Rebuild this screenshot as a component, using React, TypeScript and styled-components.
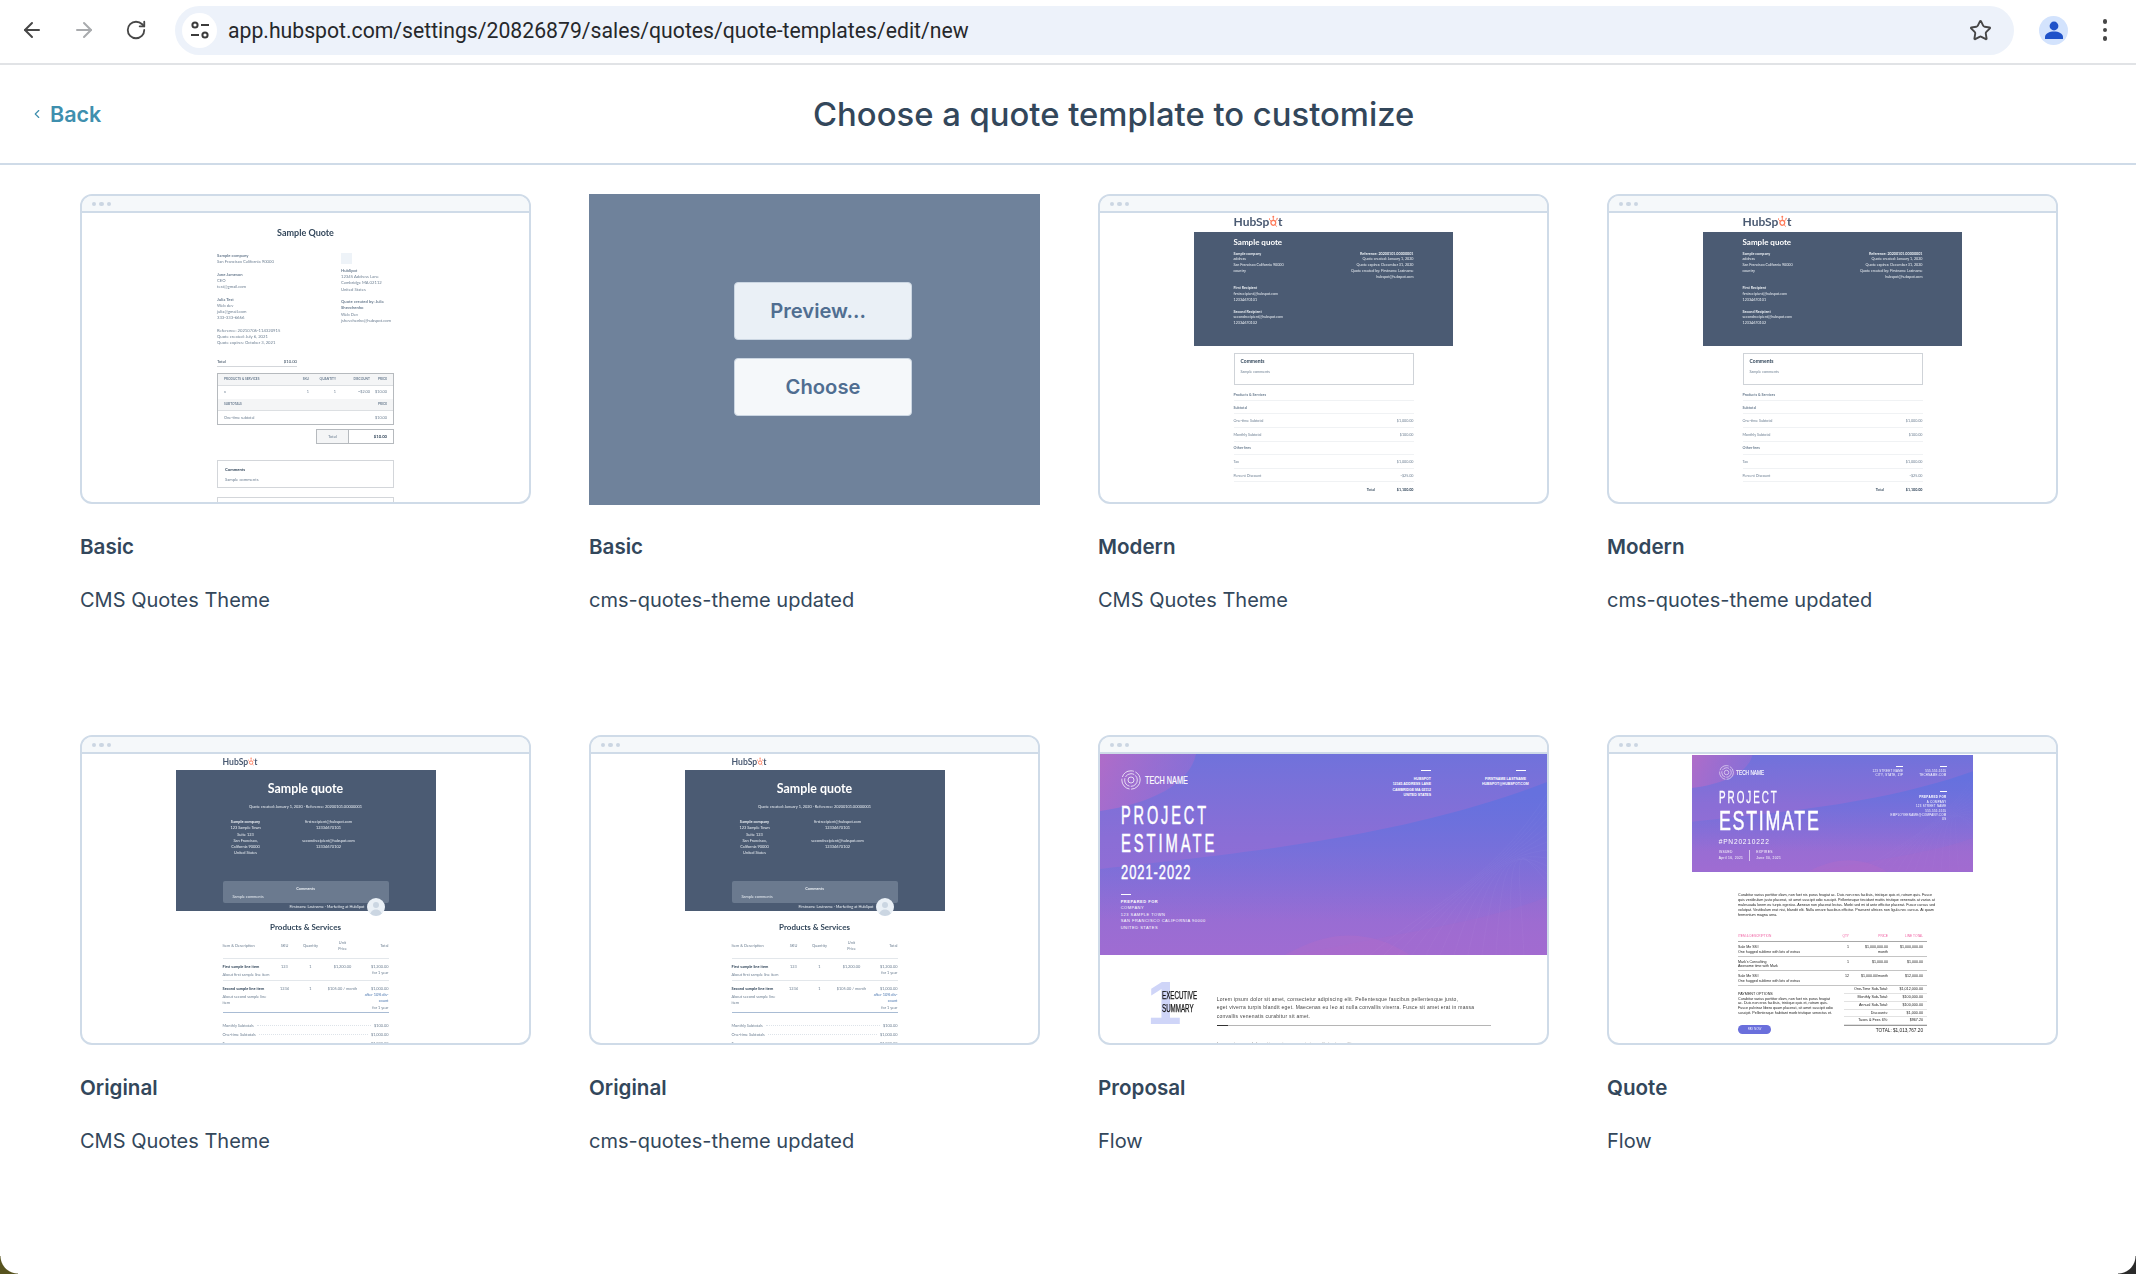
import * as React from 'react';
import styled, { createGlobalStyle } from 'styled-components';
import { ArrowLeft, ArrowRight, ChevronLeft, RotateCw, Star } from 'lucide-react';

const GlobalStyle = createGlobalStyle`
    html, body {
        margin: 0;
        padding: 0;
        background: #ffffff;
    }
    body {
        font-family: Inter, "Noto Sans", sans-serif;
        color: #33475b;
    }
    * {
        box-sizing: border-box;
    }
`;

const Screen = styled.div`
    position: relative;
    width: 2136px;
    height: 1274px;
    overflow: hidden;
    background: #ffffff;

    &::before, &::after {
        content: "";
        position: absolute;
        bottom: 0;
        width: 18px;
        height: 18px;
    }
    &::before {
        left: 0;
        background: radial-gradient(circle at top right, transparent 17px, #57531f 18px);
    }
    &::after {
        right: 0;
        background: radial-gradient(circle at top left, transparent 17px, #2a2a2a 18px);
    }
`;

/* browser toolbar */
const Toolbar = styled.div`
    display: flex;
    align-items: center;
    height: 65px;
    padding: 0 18px 3px 20px;
    border-bottom: 2px solid #e1e3e6;
`;

const NavButton = styled.div<{ $off?: boolean }>`
    display: flex;
    align-items: center;
    justify-content: center;
    width: 24px;
    height: 24px;
    margin-right: 28px;
    color: ${p => (p.$off ? '#a9abae' : '#474747')};
`;

const AddressBar = styled.div`
    display: flex;
    align-items: center;
    width: 1839px;
    height: 49px;
    margin-left: -1px;
    padding: 0 22px 0 7px;
    border-radius: 25px;
    background: #edf2fa;
`;

const TuneChip = styled.div`
    display: flex;
    align-items: center;
    justify-content: center;
    width: 35px;
    height: 35px;
    border-radius: 50%;
    background: #ffffff;
    color: #3b3b3b;
`;

const Url = styled.span`
    flex: 1;
    margin-left: 11px;
    font-family: Roboto, sans-serif;
    font-size: 21.2px;
    color: #26282b;
`;

const Avatar = styled.div`
    display: flex;
    align-items: center;
    justify-content: center;
    width: 29px;
    height: 29px;
    margin-left: 25px;
    border-radius: 50%;
    background: #d3e3fd;
    color: #1f52c9;
`;

const MenuDots = styled.div`
    display: flex;
    flex-direction: column;
    gap: 4px;
    margin-left: 35px;

    & > i {
        display: block;
        width: 4.4px;
        height: 4.4px;
        border-radius: 50%;
        background: #474747;
    }
`;

/* page header */
const Header = styled.header`
    display: flex;
    align-items: center;
    height: 100px;
    padding: 0 10px 0 30px;
    border-bottom: 2px solid #cfdbe8;
`;

const BackLink = styled.a`
    display: flex;
    align-items: center;
    gap: 6px;
    font-size: 21.5px;
    font-weight: 600;
    color: #3f8fae;
`;

const PageTitle = styled.h1`
    flex: 1;
    margin: 0;
    text-align: center;
    font-size: 32.8px;
    font-weight: 520;
    color: #33475b;
`;

/* template grid */
const Grid = styled.main`
    display: grid;
    grid-template-columns: repeat(4, 451px);
    column-gap: 58px;
    row-gap: 119px;
    padding: 29px 0 0 80px;
`;

const Item = styled.section`
    display: flex;
    flex-direction: column;
`;

const Card = styled.div`
    position: relative;
    display: flex;
    flex-direction: column;
    height: 310px;
    border: 2px solid #cfdbe8;
    border-radius: 12px;
    overflow: hidden;
    background: #ffffff;
`;

const CardBar = styled.div`
    display: flex;
    align-items: center;
    flex: none;
    gap: 3px;
    height: 17px;
    padding: 1px 0 0 9.5px;
    background: #f5f8fa;
    border-bottom: 2px solid #cfdbe8;

    & > i {
        display: block;
        width: 4.5px;
        height: 4.5px;
        border-radius: 50%;
        background: #cbd6e2;
    }
`;

const Viewport = styled.div`
    flex: 1;
    min-height: 0;
    overflow: hidden;
    filter: blur(0.3px);
`;

const HoverOverlay = styled.div`
    display: flex;
    flex-direction: column;
    align-items: center;
    justify-content: center;
    gap: 18px;
    height: 311px;
    margin-bottom: -1px;
    padding: 0 0 2px 17px;
    background: #6f829b;
`;

const OverlayButton = styled.div<{ $pale?: boolean; $shift?: boolean }>`
    display: flex;
    align-items: center;
    justify-content: center;
    width: 178px;
    height: 58px;
    padding-right: ${p => (p.$shift ? '10px' : '0')};
    border: 1px solid #cbd6e2;
    border-radius: 4px;
    background: ${p => (p.$pale ? '#f5f8fa' : '#eaf0f6')};
    font-size: 20.2px;
    font-weight: 600;
    color: #506e91;
`;

const ItemTitle = styled.div`
    margin-top: 27px;
    line-height: 32px;
    font-size: 20.6px;
    font-weight: 600;
    color: #33475b;
`;

const ItemSub = styled.div`
    margin-top: 21px;
    line-height: 32px;
    font-size: 20px;
    font-weight: 400;
    color: #33475b;
`;

/* shared thumbnail text */
const Line = styled.div<{ $b?: boolean; $blue?: boolean }>`
    font-weight: ${p => (p.$b ? 700 : 400)};
    color: ${p => (p.$blue ? '#4d78b0' : 'inherit')};
    white-space: nowrap;
`;

const Para = styled.div<{ $gap?: number }>`
    margin-bottom: ${p => p.$gap || 0}px;
`;

const LogoText = styled.div<{ $size: number }>`
    display: inline-flex;
    align-items: center;
    font-family: Lato, sans-serif;
    font-size: ${p => p.$size}px;
    font-weight: 700;
    line-height: 1;
    color: #4a5a72;
`;

const HubLogo = ({ size }: { size: number }) => (
    <LogoText $size={size}>
        HubSp
        <svg width={size * 0.72} height={size * 1.15} viewBox="0 0 18 28">
            <circle cx="9" cy="16" r="5" fill="none" stroke="#ff7a59" strokeWidth="2.6" />
            <path d="M9 11V4M13 13l4-5M5 13L1 9M13 20l3 4" stroke="#ff7a59" strokeWidth="1.8" />
            <circle cx="9" cy="3" r="2" fill="#ff7a59" />
            <circle cx="17" cy="7" r="1.4" fill="#ff7a59" />
            <circle cx="1" cy="8" r="1.4" fill="#ff7a59" />
        </svg>
        t
    </LogoText>
);

/* Basic template thumbnail */
const BasicDoc = styled.div`
    width: 177px;
    margin: 0 auto;
    font-family: Lato, sans-serif;
    font-size: 4.2px;
    line-height: 6.22px;
    color: #6d7f92;
`;

const BasicTitle = styled.div`
    padding-top: 14px;
    margin-bottom: 14px;
    line-height: 12px;
    text-align: center;
    font-size: 9px;
    font-weight: 700;
    color: #33475b;
`;

const BasicColumns = styled.div`
    display: grid;
    grid-template-columns: 124px 1fr;
`;

const LogoStub = styled.div`
    width: 11px;
    height: 11px;
    margin-bottom: 4px;
    background: #eef3f8;
`;

const BasicTotal = styled.div`
    display: flex;
    justify-content: space-between;
    width: 80px;
    margin-top: 12.5px;
    padding-bottom: 1px;
    border-bottom: 1.2px solid #d3d6da;
    color: #33475b;
`;

const BasicTable = styled.div`
    margin-top: 6px;
    border: 1px solid #b6babe;
`;

const BasicRow = styled.div<{ $head?: boolean; $h: number }>`
    display: grid;
    grid-template-columns: 57px 28px 27px 34px 1fr;
    align-items: center;
    height: ${p => p.$h}px;
    padding: 0 6px;
    background: ${p => (p.$head ? '#f4f5f6' : '#ffffff')};
    border-bottom: ${p => (p.$head ? '1.4px solid #dcdfe2' : '0')};
    font-size: ${p => (p.$head ? 3.2 : 3.8)}px;
    font-weight: ${p => (p.$head ? 700 : 400)};

    & > span:not(:first-child) {
        text-align: right;
    }
`;

const BasicSplitRow = styled(BasicRow)`
    grid-template-columns: 1fr auto;
`;

const BasicGrand = styled.div`
    display: grid;
    grid-template-columns: 32px 1fr;
    width: 78px;
    height: 15px;
    margin: 3.7px 0 0 auto;
    border: 1px solid #b6babe;
    line-height: 13px;

    & > span:first-child {
        text-align: center;
        background: #f4f5f6;
        border-right: 1px solid #b6babe;
    }
    & > span:last-child {
        padding-right: 6px;
        text-align: right;
        font-weight: 700;
        color: #33475b;
    }
`;

const BasicBox = styled.div<{ $h: number; $top: number }>`
    height: ${p => p.$h}px;
    margin-top: ${p => p.$top}px;
    padding: 6px 7px 0;
    border: 1px solid #d3d6da;

    & > div:first-child {
        margin-bottom: 4px;
        color: #33475b;
    }
`;

/* Modern template thumbnail */
const ModernDoc = styled.div`
    font-family: Lato, sans-serif;
    font-size: 3.7px;
    line-height: 5.8px;
    color: #6d7f92;
`;

const Column180 = styled.div`
    width: 180px;
    margin: 0 auto;
`;

const ModernLogoRow = styled(Column180)`
    height: 18.7px;
    padding-top: 2px;
`;

const DarkBanner = styled.div<{ $h: number; $w: number }>`
    width: ${p => p.$w}px;
    height: ${p => p.$h}px;
    margin: 0 auto;
    background: #4b5b73;
    color: #e8edf2;
`;

const ModernHeading = styled.div`
    padding-top: 5px;
    margin-bottom: 4px;
    line-height: 10px;
    font-size: 8px;
    font-weight: 700;
    color: #ffffff;
`;

const ModernSplit = styled.div`
    display: flex;
    justify-content: space-between;
`;

const RightText = styled.div`
    text-align: right;
`;

const CommentsBox = styled.div`
    height: 32px;
    margin-top: 7.7px;
    padding: 5px 6px 0;
    border: 1px solid #cfd3d8;

    & > div:first-child {
        margin-bottom: 4px;
        font-size: 5px;
        color: #33475b;
    }
`;

const ModernRow = styled.div<{ $h: number; $ruled?: boolean }>`
    display: flex;
    justify-content: space-between;
    align-items: flex-end;
    height: ${p => p.$h}px;
    padding-bottom: 3px;
    border-bottom: ${p => (p.$ruled ? '1px solid #f0f2f4' : '0')};
`;

const ModernTotal = styled.div`
    display: flex;
    justify-content: flex-end;
    gap: 22px;
    padding-top: 5px;
    font-weight: 700;
    color: #33475b;
`;

/* Original template thumbnail */
const OriginalDoc = styled.div`
    font-family: Lato, sans-serif;
    font-size: 3.9px;
    line-height: 6.25px;
    color: #6d7f92;
`;

const Column166 = styled.div`
    position: relative;
    width: 166px;
    margin: 0 auto;
`;

const OriginalLogoRow = styled(Column166)`
    height: 16.4px;
    padding-top: 3px;
`;

const OriginalHeading = styled.div`
    padding-top: 11px;
    line-height: 16px;
    text-align: center;
    font-size: 12.4px;
    font-weight: 700;
    color: #ffffff;
`;

const OriginalMeta = styled.div`
    margin-top: 7px;
    text-align: center;
`;

const OriginalColumns = styled.div`
    display: grid;
    grid-template-columns: 46px 120px;
    margin-top: 8.4px;
    text-align: center;
`;

const OriginalComments = styled.div`
    height: 22.3px;
    margin-top: 24.2px;
    padding: 4.5px 10px 0;
    border-radius: 2px;
    background: #6b7a8f;
    line-height: 7.6px;

    & > div:first-child {
        text-align: center;
    }
`;

const OriginalSigner = styled.div`
    padding-right: 24px;
    line-height: 8.3px;
    text-align: right;
`;

const SignerAvatar = styled.div`
    position: absolute;
    right: 3.7px;
    bottom: -5px;
    width: 18px;
    height: 18px;
    border-radius: 50%;
    overflow: hidden;
    background: #eaf0f6;
    color: #cbd6e2;
`;

const OriginalSection = styled.div`
    margin-top: 9.6px;
    line-height: 12px;
    text-align: center;
    font-size: 8px;
    font-weight: 700;
    color: #33475b;
`;

const OriginalGrid = styled.div<{ $h: number; $head?: boolean; $blue?: boolean }>`
    display: grid;
    grid-template-columns: 52px 20px 32px 32px 30px;
    align-items: ${p => (p.$head ? 'center' : 'start')};
    height: ${p => p.$h}px;
    padding-top: ${p => (p.$head ? '2px' : '5px')};
    border-bottom: 1px solid ${p => (p.$blue ? '#a9bcd4' : '#e3e7eb')};
    text-align: center;

    & > div:first-child {
        text-align: left;
    }
    & > div:last-child {
        text-align: right;
    }
`;

const ItemName = styled.div`
    margin-bottom: 1.8px;
    font-weight: 700;
    color: #33475b;
    white-space: nowrap;
`;

const WrapLine = styled.div`
    white-space: normal;
`;

const DottedRow = styled.div`
    display: flex;
    align-items: center;
    gap: 3px;
    height: 9px;

    & > i {
        flex: 1;
        border-bottom: 1px dotted #dde3e9;
    }
`;

/* proposal and quote banners */
const WaveBanner = styled.div<{ $h: number; $w?: number }>`
    position: relative;
    width: ${p => (p.$w ? p.$w + 'px' : '100%')};
    height: ${p => p.$h}px;
    margin: 0 auto;
    overflow: hidden;
    background: #8a6ed6;
    color: #ffffff;
    font-family: "Liberation Sans", sans-serif;
`;

const WaveArt = styled.svg`
    position: absolute;
    inset: 0;
    width: 100%;
    height: 100%;
`;

const Narrow = styled.div<{ $size: number; $lh: number; $space?: number; $scale?: number; $right?: boolean; $b?: boolean; $top?: number; $thick?: number }>`
    position: relative;
    margin-top: ${p => p.$top || 0}px;
    font-size: ${p => p.$size}px;
    line-height: ${p => p.$lh}px;
    letter-spacing: ${p => p.$space || 0}px;
    font-weight: ${p => (p.$b ? 700 : 400)};
    -webkit-text-stroke: ${p => p.$thick || 0}px currentColor;
    white-space: nowrap;
    transform: scaleX(${p => p.$scale || 0.62});
    transform-origin: ${p => (p.$right ? 'right' : 'left')} center;
    text-align: ${p => (p.$right ? 'right' : 'left')};
`;

const SmallCaps = styled.div<{ $size: number; $lh: number; $right?: boolean; $b?: boolean; $space?: number; $top?: number }>`
    position: relative;
    margin-top: ${p => p.$top || 0}px;
    font-size: ${p => p.$size}px;
    font-weight: ${p => (p.$b ? 700 : 400)};
    line-height: ${p => p.$lh}px;
    letter-spacing: ${p => (p.$space === undefined ? 0.5 : p.$space)}px;
    text-align: ${p => (p.$right ? 'right' : 'left')};
    white-space: nowrap;
`;

const BrandRow = styled.div<{ $gap: number }>`
    position: relative;
    display: flex;
    align-items: center;
    gap: ${p => p.$gap}px;
`;

const Dash = styled.div<{ $w: number; $right?: boolean; $after: number; $before?: number }>`
    position: relative;
    width: ${p => p.$w}px;
    height: 1px;
    margin: ${p => p.$before || 0}px ${p => (p.$right ? '0' : 'auto')} ${p => p.$after}px ${p => (p.$right ? 'auto' : '0')};
    background: #ffffff;
`;

const TechLogo = ({ size }: { size: number }) => (
    <svg width={size} height={size} viewBox="0 0 24 24" fill="none" stroke="#ffffff" strokeWidth="0.9">
        <circle cx="12" cy="12" r="11" strokeDasharray="17 2" />
        <circle cx="12" cy="12" r="7.6" strokeDasharray="12 1.5" />
        <circle cx="12" cy="12" r="3.6" />
    </svg>
);

const Waves = ({ id }: { id: string }) => (
    <WaveArt viewBox="0 0 447 201" preserveAspectRatio="none">
        <defs>
            <linearGradient id={id + 'base'} x1="0" y1="0" x2="0" y2="1">
                <stop offset="0" stopColor="#7072db" />
                <stop offset="0.42" stopColor="#8a6ed6" />
                <stop offset="1" stopColor="#9f6cd2" />
            </linearGradient>
            <linearGradient id={id + 'band'} gradientUnits="userSpaceOnUse" x1="0" y1="40" x2="0" y2="165">
                <stop offset="0" stopColor="#6671de" />
                <stop offset="1" stopColor="#6671de" stopOpacity="0" />
            </linearGradient>
            <linearGradient id={id + 'pink'} x1="0" y1="0" x2="1" y2="0.3">
                <stop offset="0" stopColor="#b06cc8" />
                <stop offset="1" stopColor="#a56cd0" stopOpacity="0.4" />
            </linearGradient>
        </defs>
        <rect width="447" height="201" fill={`url(#${id}base)`} />
        <path d="M0 115C130 100 300 85 447 28V201H0Z" fill={`url(#${id}band)`} />
        <path d="M0 0H96C90 30 50 50 0 57Z" fill={`url(#${id}pink)`} />
        <path d="M447 143C390 165 340 172 250 190C230 194 210 198 190 201H447Z" fill="#b56cc8" opacity="0.16" />
        <path d="M185 201C225 178 265 172 310 201Z" fill="#bb6dc8" opacity="0.3" />
        {[0, 1, 2, 3, 4, 5, 6, 7, 8, 9, 10, 11].map(i => (
            <path
                key={i}
                d={`M${270 + i * 14} 201C${330 + i * 8} ${150 - i * 5} ${390 + i * 2} ${130 - i * 4} 447 ${40 + i * 8}`}
                fill="none"
                stroke="#ffffff"
                strokeWidth="0.4"
                opacity="0.07"
            />
        ))}
    </WaveArt>
);

/* Proposal template thumbnail */
const ProposalDoc = styled.div`
    font-family: "Liberation Sans", sans-serif;
`;

const ProposalBody = styled.div`
    position: relative;
    height: 201px;
    padding: 16px 21px 0 20.7px;
`;

const ProposalTop = styled.div`
    position: relative;
    display: flex;
    justify-content: space-between;
    align-items: flex-start;
    height: 31px;
`;

const ProposalContacts = styled.div`
    display: flex;
    gap: 40px;
`;

const ContactBlock = styled.div<{ $w: number }>`
    width: ${p => p.$w}px;
`;

const Summary = styled.div`
    position: relative;
    display: flex;
    padding: 34px 0 0 62px;
`;

const BigOne = styled.div`
    position: absolute;
    left: 47px;
    top: 17px;
    font-size: 62px;
    line-height: 62px;
    font-weight: 700;
    color: #cfd5f8;
`;

const SummaryHead = styled.div`
    position: relative;
    width: 54.7px;
    color: #111111;
`;

const SummaryCopy = styled.div`
    width: 274px;
    margin-top: 6px;
    font-size: 5px;
    letter-spacing: 0.27px;
    line-height: 8.3px;
    color: #444444;
    white-space: nowrap;
`;

const SummaryRule = styled.div`
    height: 1px;
    margin-top: 5px;
    background: linear-gradient(to right, #333333 11px, #b5b5b5 11px);
`;

const ClippedLine = styled.div`
    margin-top: 14px;
    color: #888888;
`;

/* Quote template thumbnail */
const QuoteDoc = styled.div`
    padding-top: 1px;
    font-family: "Liberation Sans", sans-serif;
    font-size: 3.7px;
    line-height: 4.9px;
    color: #222222;
`;

const QuoteInner = styled.div`
    position: relative;
    display: flex;
    justify-content: space-between;
    height: 100%;
    padding: 10px 26.7px 0;
`;

const QuoteLeft = styled.div`
    display: flex;
    flex-direction: column;
`;

const QuoteDates = styled.div`
    position: relative;
    display: flex;
    margin-top: 4px;
    font-size: 3.3px;
    line-height: 5.6px;
    letter-spacing: 0.3px;

    & > div:first-child {
        padding-right: 6px;
        margin-right: 6px;
        border-right: 1px solid rgba(255, 255, 255, 0.6);
    }
`;

const QuoteRight = styled.div`
    position: relative;
    display: flex;
    flex-direction: column;
    align-items: flex-end;
    padding-top: 1px;
`;

const QuoteAddress = styled.div`
    display: flex;
    gap: 16px;
    margin-bottom: 14px;
`;

const QuoteBody = styled.div`
    width: 189px;
    margin: 21.5px auto 0;
    white-space: nowrap;
`;

const QuoteCopy = styled.div`
    margin-bottom: 16px;
`;

const QuoteGrid = styled.div<{ $head?: boolean }>`
    display: grid;
    grid-template-columns: 98px 13px 39px 35px;
    height: ${p => (p.$head ? 8 : 14.8)}px;
    padding-top: ${p => (p.$head ? 0 : 3)}px;
    border-bottom: ${p => (p.$head ? '1px solid #a8a8a8' : '1px solid #c4c4c4')};
    color: ${p => (p.$head ? '#ef5da0' : 'inherit')};
    font-size: ${p => (p.$head ? 3.2 : 3.6)}px;

    & > div:not(:first-child) {
        text-align: right;
    }
`;

const QuoteFoot = styled.div`
    display: flex;
`;

const QuotePay = styled.div`
    width: 106px;
    padding-top: 5.5px;
`;

const PayButton = styled.div`
    display: flex;
    align-items: center;
    justify-content: center;
    width: 33px;
    height: 8.7px;
    margin-top: 9px;
    border-radius: 4.4px;
    background: #6a6fdc;
    font-size: 3px;
    color: #e8e8ff;
`;

const QuoteTotals = styled.div`
    flex: 1;
`;

const QuoteSum = styled.div`
    display: grid;
    grid-template-columns: 44px 35px;
    height: 7.8px;
    padding-left: 0;
    border-bottom: 1px solid #e2e2e2;
    line-height: 7px;
    text-align: right;
`;

const QuoteGrand = styled.div`
    padding: 1px 4px 0 0;
    border-top: 1px solid #999999;
    text-align: right;
    line-height: 8px;
    font-size: 4.7px;
`;

const BasicThumb = () => (
    <BasicDoc>
        <BasicTitle>Sample Quote</BasicTitle>
        <BasicColumns>
            <div>
                <Para $gap={6.22}>
                    <Line $b>Sample company</Line>
                    <Line>San Francisco California 90000</Line>
                </Para>
                <Para $gap={6.22}>
                    <Line $b>Jane Jameson</Line>
                    <Line>CEO</Line>
                    <Line>test@gmail.com</Line>
                </Para>
                <Para $gap={6.22}>
                    <Line $b>Julia Test</Line>
                    <Line>Web dev</Line>
                    <Line>julia@gmail.com</Line>
                    <Line>333-333-6666</Line>
                </Para>
                <Line>Reference: 20210706-114320915</Line>
                <Line>Quote created: July 6, 2021</Line>
                <Line>Quote expires: October 3, 2021</Line>
            </div>
            <div>
                <LogoStub />
                <Para $gap={6.22}>
                    <Line $b>HubSpot</Line>
                    <Line>12345 Address Lane</Line>
                    <Line>Cambridge MA 02112</Line>
                    <Line>United States</Line>
                </Para>
                <Line $b>Quote created by: Julia</Line>
                <Line $b>Shevchenko</Line>
                <Line>Web Dev</Line>
                <Line>jshevchenko@hubspot.com</Line>
            </div>
        </BasicColumns>
        <BasicTotal>
            <span>Total</span>
            <span>$10.00</span>
        </BasicTotal>
        <BasicTable>
            <BasicRow $head $h={11.7}>
                <span>PRODUCTS &amp; SERVICES</span>
                <span>SKU</span>
                <span>QUANTITY</span>
                <span>DISCOUNT</span>
                <span>PRICE</span>
            </BasicRow>
            <BasicRow $h={13}>
                <span>x</span>
                <span>1</span>
                <span>1</span>
                <span>−$2.00</span>
                <span>$10.00</span>
            </BasicRow>
            <BasicSplitRow $head $h={12.5}>
                <span>SUBTOTALS</span>
                <span>PRICE</span>
            </BasicSplitRow>
            <BasicSplitRow $h={13}>
                <span>One-time subtotal</span>
                <span>$10.00</span>
            </BasicSplitRow>
        </BasicTable>
        <BasicGrand>
            <span>Total</span>
            <span>$10.00</span>
        </BasicGrand>
        <BasicBox $h={28} $top={15.7}>
            <Line $b>Comments</Line>
            <Line>Sample comments</Line>
        </BasicBox>
        <BasicBox $h={20} $top={9} />
    </BasicDoc>
);

const ModernThumb = () => (
    <ModernDoc>
        <ModernLogoRow>
            <HubLogo size={12} />
        </ModernLogoRow>
        <DarkBanner $w={259} $h={114}>
            <Column180>
                <ModernHeading>Sample quote</ModernHeading>
                <ModernSplit>
                    <div>
                        <Para $gap={11.6}>
                            <Line $b>Sample company</Line>
                            <Line>address</Line>
                            <Line>San Francisco California 90000</Line>
                            <Line>country</Line>
                        </Para>
                        <Para $gap={5.8}>
                            <Line $b>First Recipient</Line>
                            <Line>firstrecipient@hubspot.com</Line>
                            <Line>12334670101</Line>
                        </Para>
                        <Line $b>Second Recipient</Line>
                        <Line>secondrecipient@hubspot.com</Line>
                        <Line>12334670102</Line>
                    </div>
                    <RightText>
                        <Line $b>Reference: 20200101.00000001</Line>
                        <Line>Quote created: January 1, 2020</Line>
                        <Line>Quote expires: December 31, 2020</Line>
                        <Line>Quote created by: Firstname Lastname</Line>
                        <Line>hubspot@hubspot.com</Line>
                    </RightText>
                </ModernSplit>
            </Column180>
        </DarkBanner>
        <Column180>
            <CommentsBox>
                <Line $b>Comments</Line>
                <Line>Sample comments</Line>
            </CommentsBox>
            <ModernRow $h={16} $ruled>
                <Line $b>Products &amp; Services</Line>
            </ModernRow>
            <ModernRow $h={13} $ruled>
                <Line $b>Subtotal</Line>
            </ModernRow>
            <ModernRow $h={13.6} $ruled>
                <Line>One-time Subtotal</Line>
                <Line>$1,000.00</Line>
            </ModernRow>
            <ModernRow $h={13.6} $ruled>
                <Line>Monthly Subtotal</Line>
                <Line>$100.00</Line>
            </ModernRow>
            <ModernRow $h={13.4} $ruled>
                <Line $b>Other fees</Line>
            </ModernRow>
            <ModernRow $h={13.6} $ruled>
                <Line>Tax</Line>
                <Line>$1,000.00</Line>
            </ModernRow>
            <ModernRow $h={13.9} $ruled>
                <Line>Percent Discount</Line>
                <Line>-$25.00</Line>
            </ModernRow>
            <ModernTotal>
                <span>Total</span>
                <span>$1,100.00</span>
            </ModernTotal>
        </Column180>
    </ModernDoc>
);

const OriginalThumb = () => (
    <OriginalDoc>
        <OriginalLogoRow>
            <HubLogo size={8.6} />
        </OriginalLogoRow>
        <DarkBanner $w={260} $h={141}>
            <Column166>
                <OriginalHeading>Sample quote</OriginalHeading>
                <OriginalMeta>Quote created: January 1, 2020 · Reference: 20200101.00000001</OriginalMeta>
                <OriginalColumns>
                    <div>
                        <Line $b>Sample company</Line>
                        <Line>123 Sample Town</Line>
                        <Line>Suite 123</Line>
                        <Line>San Francisco,</Line>
                        <Line>California 90000</Line>
                        <Line>United States</Line>
                    </div>
                    <div>
                        <Para $gap={6.25}>
                            <Line>firstrecipient@hubspot.com</Line>
                            <Line>12334670101</Line>
                        </Para>
                        <Line>secondrecipient@hubspot.com</Line>
                        <Line>12334670102</Line>
                    </div>
                </OriginalColumns>
                <OriginalComments>
                    <Line $b>Comments</Line>
                    <Line>Sample comments</Line>
                </OriginalComments>
                <OriginalSigner>Firstname Lastname · Marketing at HubSpot</OriginalSigner>
                <SignerAvatar>
                    <svg width="18" height="18" viewBox="0 0 18 18" fill="currentColor">
                        <circle cx="9" cy="7" r="3" />
                        <path d="M3 18c0-4 2.500-6.500 6-6.500s6 2.500 6 6.500Z" />
                    </svg>
                </SignerAvatar>
            </Column166>
        </DarkBanner>
        <Column166>
            <OriginalSection>Products &amp; Services</OriginalSection>
            <OriginalGrid $h={26} $head>
                <div>Item &amp; Description</div>
                <div>SKU</div>
                <div>Quantity</div>
                <div>
                    Unit
                    <br />
                    Price
                </div>
                <div>Total</div>
            </OriginalGrid>
            <OriginalGrid $h={22}>
                <div>
                    <ItemName>First sample line item</ItemName>
                    <Line>About first sample line item</Line>
                </div>
                <div>123</div>
                <div>1</div>
                <div>$1,200.00</div>
                <div>
                    $1,200.00
                    <br />
                    for 1 year
                </div>
            </OriginalGrid>
            <OriginalGrid $h={32.3} $blue>
                <div>
                    <ItemName>Second sample line item</ItemName>
                    <WrapLine>About second sample line item</WrapLine>
                </div>
                <div>1234</div>
                <div>1</div>
                <div>$105.00 / month</div>
                <div>
                    $1,000.00
                    <Line $blue>after 10% dis-</Line>
                    <Line $blue>count</Line>
                    for 1 year
                </div>
            </OriginalGrid>
            <Para $gap={8} />
            <DottedRow>
                <span>Monthly Subtotals</span>
                <i />
                <span>$100.00</span>
            </DottedRow>
            <DottedRow>
                <span>One-time Subtotals</span>
                <i />
                <span>$1,000.00</span>
            </DottedRow>
            <DottedRow>
                <span>Tax</span>
                <i />
                <span>$1,000.00</span>
            </DottedRow>
        </Column166>
    </OriginalDoc>
);

const ProposalThumb = () => (
    <ProposalDoc>
        <WaveBanner $h={201}>
            <Waves id="prop" />
            <ProposalBody>
                <ProposalTop>
                    <BrandRow $gap={4}>
                        <TechLogo size={20} />
                        <Narrow $size={10.7} $lh={20} $scale={0.68} $thick={0.2}>TECH NAME</Narrow>
                    </BrandRow>
                    <ProposalContacts>
                        <ContactBlock $w={70}>
                            <Dash $w={10} $right $after={4.5} />
                            <Narrow $size={4.4} $lh={5.5} $scale={0.8} $right $b>HUBSPOT</Narrow>
                            <Narrow $size={4.4} $lh={5.5} $scale={0.8} $right $b>12345 ADDRESS LANE</Narrow>
                            <Narrow $size={4.4} $lh={5.5} $scale={0.8} $right $b>CAMBRIDGE MA 02112</Narrow>
                            <Narrow $size={4.4} $lh={5.5} $scale={0.8} $right $b>UNITED STATES</Narrow>
                        </ContactBlock>
                        <ContactBlock $w={55}>
                            <Dash $w={10} $right $after={4.5} />
                            <Narrow $size={4.4} $lh={5.5} $scale={0.8} $right $b>FIRSTNAME LASTNAME</Narrow>
                            <Narrow $size={4.4} $lh={5.5} $scale={0.8} $right $b>HUBSPOT@HUBSPOT.COM</Narrow>
                        </ContactBlock>
                    </ProposalContacts>
                </ProposalTop>
                <Narrow $size={25} $lh={28} $space={5} $scale={0.58} $thick={0.5}>PROJECT</Narrow>
                <Narrow $size={25} $lh={28} $space={5} $scale={0.59} $thick={0.5}>ESTIMATE</Narrow>
                <Narrow $size={20} $lh={22} $space={1.5} $scale={0.645} $top={4} $thick={0.4}>2021-2022</Narrow>
                <Dash $w={10} $before={10.5} $after={4} />
                <SmallCaps $size={4} $lh={6.55} $b>PREPARED FOR</SmallCaps>
                <SmallCaps $size={4} $lh={6.55}>COMPANY</SmallCaps>
                <SmallCaps $size={4} $lh={6.55}>123 SAMPLE TOWN</SmallCaps>
                <SmallCaps $size={4} $lh={6.55}>SAN FRANCISCO CALIFORNIA 90000</SmallCaps>
                <SmallCaps $size={4} $lh={6.55}>UNITED STATES</SmallCaps>
            </ProposalBody>
        </WaveBanner>
        <Summary>
            <BigOne>1</BigOne>
            <SummaryHead>
                <Narrow $size={10} $lh={13.3} $scale={0.62} $thick={0.25}>EXECUTIVE</Narrow>
                <Narrow $size={10} $lh={13.3} $scale={0.62} $thick={0.25}>SUMMARY</Narrow>
            </SummaryHead>
            <SummaryCopy>
                Lorem ipsum dolor sit amet, consectetur adipiscing elit. Pellentesque faucibus pellentesque justo,
                <br />
                eget viverra turpis blandit eget. Maecenas eu leo at nulla convallis viverra. Fusce sit amet erat in massa
                <br />
                convallis venenatis curabitur sit amet.
                <SummaryRule />
                <ClippedLine>Lorem ipsum dolor sit amet, consectetur adipiscing elit.</ClippedLine>
            </SummaryCopy>
        </Summary>
    </ProposalDoc>
);

const QuoteThumb = () => (
    <QuoteDoc>
        <WaveBanner $w={281} $h={116.7}>
            <Waves id="quote" />
            <QuoteInner>
                <QuoteLeft>
                    <BrandRow $gap={2.5}>
                        <TechLogo size={15} />
                        <Narrow $size={8} $lh={15} $scale={0.6} $thick={0.15}>TECH NAME</Narrow>
                    </BrandRow>
                    <Narrow $size={17} $lh={21} $space={3.4} $scale={0.58} $top={7} $thick={0.3}>PROJECT</Narrow>
                    <Narrow $size={27} $lh={29} $space={2.6} $scale={0.66} $top={-1} $thick={0.5}>ESTIMATE</Narrow>
                    <SmallCaps $size={6.6} $lh={9} $space={0.8} $top={1}>#PN20210222</SmallCaps>
                    <QuoteDates>
                        <div>
                            <div>ISSUED</div>
                            <div>April 16, 2021</div>
                        </div>
                        <div>
                            <div>EXPIRES</div>
                            <div>June 30, 2021</div>
                        </div>
                    </QuoteDates>
                </QuoteLeft>
                <QuoteRight>
                    <QuoteAddress>
                        <div>
                            <Dash $w={7} $right $after={3} />
                            <SmallCaps $size={2.9} $lh={3.7} $right $space={0.3}>123 STREET NAME</SmallCaps>
                            <SmallCaps $size={2.9} $lh={3.7} $right $space={0.3}>CITY, STATE, ZIP</SmallCaps>
                        </div>
                        <div>
                            <Dash $w={7} $right $after={3} />
                            <SmallCaps $size={2.9} $lh={3.7} $right $space={0.3}>555.555.5555</SmallCaps>
                            <SmallCaps $size={2.9} $lh={3.7} $right $space={0.3}>TECHNAME.COM</SmallCaps>
                        </div>
                    </QuoteAddress>
                    <Dash $w={7} $right $after={3} />
                    <SmallCaps $size={3} $lh={4.4} $right $b $space={0.3}>PREPARED FOR</SmallCaps>
                    <SmallCaps $size={2.9} $lh={4.4} $right $space={0.3}>A COMPANY</SmallCaps>
                    <SmallCaps $size={2.9} $lh={4.4} $right $space={0.3}>123 STREET NAME</SmallCaps>
                    <SmallCaps $size={2.9} $lh={4.4} $right $space={0.3}>555.555.5555</SmallCaps>
                    <SmallCaps $size={2.9} $lh={4.4} $right $space={0.3}>EMPLOYEENAME@COMPANY.COM</SmallCaps>
                    <SmallCaps $size={2.9} $lh={4.4} $right $space={0.3}>US</SmallCaps>
                </QuoteRight>
            </QuoteInner>
        </WaveBanner>
        <QuoteBody>
            <QuoteCopy>
                Curabitur varius porttitor diam, non fuet nis purus feugiat ac. Duis non eros facilisis, tristique quis et, rutrum quis. Fusce
                <br />
                quis vestibulum justo placerat, sit amet suscipit odio suscipit. Pellentesque tincidunt mattis tristique venenatis at varius at
                <br />
                malesuada lorem eu turpis egestas. Aenean non placerat lectus. Morbi sed mi id ante efficitur placerat. Fusce cursus sed
                <br />
                volutpat. Vestibulum erat nisi, blandit elit. Nulla ornare faucibus efficitur. Praesent ultrices non ligula nec cursus. At quam
                <br />
                fermentum magna urna.
            </QuoteCopy>
            <QuoteGrid $head>
                <div>ITEM &amp; DESCRIPTION</div>
                <div>QTY</div>
                <div>PRICE</div>
                <div>LINE TOTAL</div>
            </QuoteGrid>
            <QuoteGrid>
                <div>
                    Sale Me SS#
                    <br />
                    One hugged sublime with lots of extras
                </div>
                <div>1</div>
                <div>
                    $1,000,000.00
                    <br />
                    month
                </div>
                <div>$1,000,000.00</div>
            </QuoteGrid>
            <QuoteGrid>
                <div>
                    Mark's Consulting
                    <br />
                    Awesome time with Mark
                </div>
                <div>1</div>
                <div>$1,000.00</div>
                <div>$1,000.00</div>
            </QuoteGrid>
            <QuoteGrid>
                <div>
                    Sale Me SS#
                    <br />
                    One hugged sublime with lots of extras
                </div>
                <div>12</div>
                <div>$1,000.00/month</div>
                <div>$12,000.00</div>
            </QuoteGrid>
            <QuoteFoot>
                <QuotePay>
                    PAYMENT OPTIONS
                    <br />
                    Curabitur varius porttitor diam, non fuet nis purus feugiat
                    <br />
                    ac. Duis non eros facilisis, tristique quis et, rutrum quis.
                    <br />
                    Fusce pulvinar libero quam placerat, sit amet suscipit odio
                    <br />
                    suscipit. Pellentesque habitant morb tristique senectus et.
                    <PayButton>PAY NOW</PayButton>
                </QuotePay>
                <QuoteTotals>
                    <QuoteSum>
                        <span>One-Time Sub-Total:</span>
                        <span>$1,012,000.00</span>
                    </QuoteSum>
                    <QuoteSum>
                        <span>Monthly Sub-Total:</span>
                        <span>$100,000.00</span>
                    </QuoteSum>
                    <QuoteSum>
                        <span>Annual Sub-Total:</span>
                        <span>$100,000.00</span>
                    </QuoteSum>
                    <QuoteSum>
                        <span>Discounts:</span>
                        <span>$1,000.00</span>
                    </QuoteSum>
                    <QuoteSum>
                        <span>Taxes &amp; Fees 6%:</span>
                        <span>$967.20</span>
                    </QuoteSum>
                    <QuoteGrand>TOTAL: $1,013,767.20</QuoteGrand>
                </QuoteTotals>
            </QuoteFoot>
        </QuoteBody>
    </QuoteDoc>
);

const Thumb = (props: { children: React.ReactNode }) => (
    <Card>
        <CardBar>
            <i />
            <i />
            <i />
        </CardBar>
        <Viewport>{props.children}</Viewport>
    </Card>
);

const App = () => (
    <Screen>
        <GlobalStyle />
        <Toolbar>
            <NavButton>
                <ArrowLeft size={24} strokeWidth={2} />
            </NavButton>
            <NavButton $off>
                <ArrowRight size={24} strokeWidth={2} />
            </NavButton>
            <NavButton>
                <RotateCw size={22} strokeWidth={2} />
            </NavButton>
            <AddressBar>
                <TuneChip>
                    <svg width="22" height="22" viewBox="0 0 22 22" fill="none" stroke="currentColor" strokeWidth="2">
                        <circle cx="6" cy="6" r="2.6" />
                        <path d="M12 6h8" />
                        <circle cx="16" cy="16" r="2.6" />
                        <path d="M2 16h8" />
                    </svg>
                </TuneChip>
                <Url>app.hubspot.com/settings/20826879/sales/quotes/quote-templates/edit/new</Url>
                <Star size={23} strokeWidth={2} color="#474747" />
            </AddressBar>
            <Avatar>
                <svg width="20" height="20" viewBox="0 0 20 20" fill="currentColor">
                    <circle cx="10" cy="6" r="4.400" />
                    <path d="M1 19v-2c0-3.500 4.500-5.500 9-5.500s9 2 9 5.500v2Z" />
                </svg>
            </Avatar>
            <MenuDots>
                <i />
                <i />
                <i />
            </MenuDots>
        </Toolbar>
        <Header>
            <BackLink>
                <ChevronLeft size={14} strokeWidth={2} />
                Back
            </BackLink>
            <PageTitle>Choose a quote template to customize</PageTitle>
        </Header>
        <Grid>
            <Item>
                <Thumb><BasicThumb /></Thumb>
                <ItemTitle>Basic</ItemTitle>
                <ItemSub>CMS Quotes Theme</ItemSub>
            </Item>
            <Item>
                <HoverOverlay>
                    <OverlayButton $shift>Preview...</OverlayButton>
                    <OverlayButton $pale>Choose</OverlayButton>
                </HoverOverlay>
                <ItemTitle>Basic</ItemTitle>
                <ItemSub>cms-quotes-theme updated</ItemSub>
            </Item>
            <Item>
                <Thumb><ModernThumb /></Thumb>
                <ItemTitle>Modern</ItemTitle>
                <ItemSub>CMS Quotes Theme</ItemSub>
            </Item>
            <Item>
                <Thumb><ModernThumb /></Thumb>
                <ItemTitle>Modern</ItemTitle>
                <ItemSub>cms-quotes-theme updated</ItemSub>
            </Item>
            <Item>
                <Thumb><OriginalThumb /></Thumb>
                <ItemTitle>Original</ItemTitle>
                <ItemSub>CMS Quotes Theme</ItemSub>
            </Item>
            <Item>
                <Thumb><OriginalThumb /></Thumb>
                <ItemTitle>Original</ItemTitle>
                <ItemSub>cms-quotes-theme updated</ItemSub>
            </Item>
            <Item>
                <Thumb><ProposalThumb /></Thumb>
                <ItemTitle>Proposal</ItemTitle>
                <ItemSub>Flow</ItemSub>
            </Item>
            <Item>
                <Thumb><QuoteThumb /></Thumb>
                <ItemTitle>Quote</ItemTitle>
                <ItemSub>Flow</ItemSub>
            </Item>
        </Grid>
    </Screen>
);

export default App;
